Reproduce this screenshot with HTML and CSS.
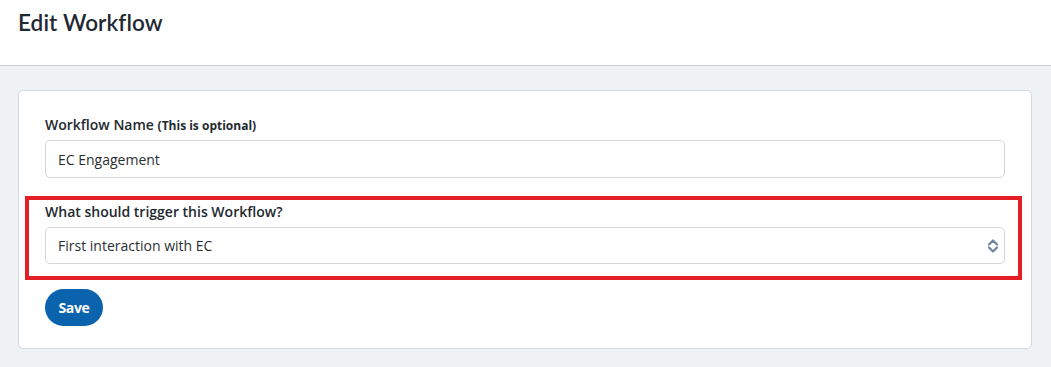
FILE: index.html
```html
<!DOCTYPE html>
<html>
<head>
<meta charset="utf-8">
<link rel="stylesheet" href="styles.css">
</head>
<body>
<header class="topbar">
  <h1 class="title">Edit Workflow</h1>
</header>
<main class="main">
  <section class="card">
    <div class="group">
      <label class="label">Workflow Name <span class="hint">(This is optional)</span></label>
      <div class="field">EC Engagement</div>
    </div>
    <div class="group highlight">
      <label class="label">What should trigger this Workflow?</label>
      <div class="field select">
        <span>First interaction with EC</span>
        <svg class="chev" width="12" height="16" viewBox="0 0 12 16">
          <path d="M2 6.5 L6 2.5 L10 6.5 M2 9.5 L6 13.5 L10 9.5" fill="none" stroke="#6a84a3" stroke-width="2.2" stroke-linecap="round" stroke-linejoin="round"/>
        </svg>
      </div>
    </div>
    <button class="btn">Save</button>
  </section>
</main>
</body>
</html>
```
FILE: styles.css
```css
html, body {
  margin: 0;
  padding: 0;
  background: #eff2f5;
  font-family: "Open Sans", "Liberation Sans", sans-serif;
  height: 367px;
  overflow: hidden;
}
.topbar {
  background: #ffffff;
  border-bottom: 1px solid #c9cdd3;
  box-sizing: border-box;
  height: 66px;
  padding: 8px 18px 0;
}
.title {
  margin: 0;
  font-family: "Lato", "Nunito", sans-serif;
  font-weight: 600;
  font-size: 22.5px;
  line-height: 30px;
  color: #1f2933;
  letter-spacing: 0.1px;
}
.main {
  padding: 24px 19px 0 18px;
}
.card {
  background: #ffffff;
  border: 1px solid #d5d9dd;
  border-radius: 5px;
  padding: 24px 26px 23px 26px;
  height: 259px;
  box-sizing: border-box;
}
.group {
  display: flex;
  flex-direction: column;
}
.label {
  font-size: 14px;
  line-height: 20px;
  font-weight: 600;
  color: #23292f;
  margin-bottom: 4px;
}
.hint {
  font-size: 12px;
  font-weight: 700;
}
.field {
  height: 38px;
  box-sizing: border-box;
  border: 1px solid #d3d7dc;
  border-radius: 5px;
  padding: 0 12px;
  display: flex;
  align-items: center;
  font-size: 14px;
  color: #2b2f33;
}
.highlight {
  margin: 18px -17px 9px -20px;
  border: 4px solid #e41e25;
  padding: 2px 13px 12px 16px;
}
.highlight .label {
  margin-bottom: 5px;
}
.select {
  justify-content: space-between;
  height: 37px;
  padding-right: 5px;
}
.chev {
  display: block;
}
.btn {
  display: block;
  width: 58px;
  height: 37px;
  border: none;
  border-radius: 19px;
  background: #0b63ae;
  color: #ffffff;
  font-family: "Open Sans", "Liberation Sans", sans-serif;
  font-weight: 700;
  font-size: 14px;
  padding: 0;
  letter-spacing: -0.3px;
}
```
